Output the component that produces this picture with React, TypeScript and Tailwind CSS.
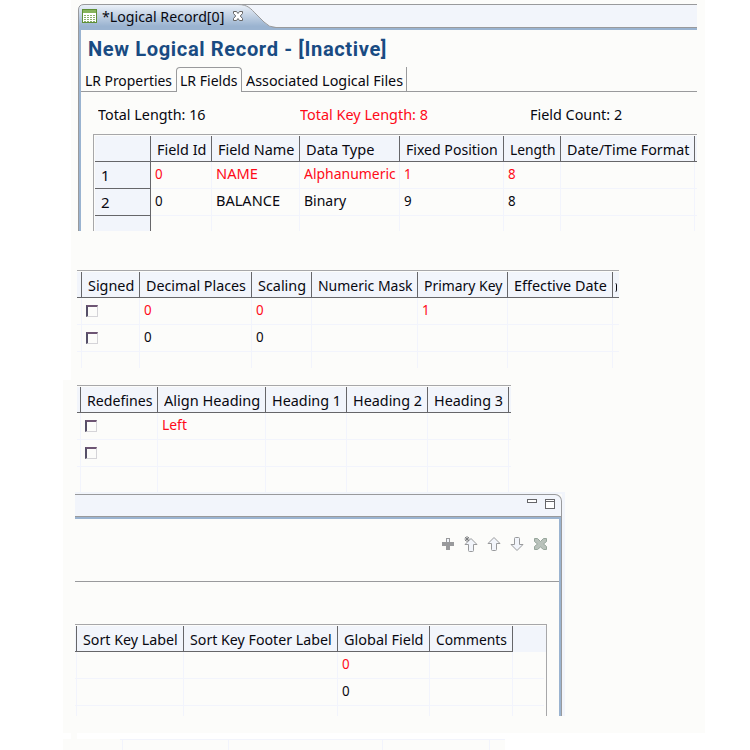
import { useLayoutEffect, useRef, useState, type ReactNode } from "react";

type TextProps = { children: string; w: number; className?: string };

/* A single-line label condensed or widened to an exact width. */
function Label({ children, w, className = "" }: TextProps) {
  const ref = useRef<HTMLSpanElement>(null);
  const [scale, setScale] = useState(1);
  useLayoutEffect(() => {
    if (ref.current) setScale(w / ref.current.offsetWidth);
  }, [w]);
  return (
    <span
      ref={ref}
      className={`inline-block shrink-0 origin-left whitespace-nowrap ${className}`}
      style={{ transform: `scaleX(${scale})` }}
    >
      {children}
    </span>
  );
}

type Cell = { text?: string; w?: number; red?: boolean; check?: boolean } | null;
type Column = {
  size: string;
  title?: string;
  w?: number;
  cells?: Cell[];
  edge?: boolean;
  blank?: boolean;
  clipped?: boolean;
};

function Checkbox() {
  return (
    <span className="mt-[6px] block size-3 shrink-0 border-2 border-t-[#6d5573] border-l-[#554f68] border-r-[#d5d4d8] border-b-[#d5d4d8] border-r-1 border-b-1 bg-[#fcfcfa]" />
  );
}

function Grid({
  columns,
  rowNumbers = false,
  last,
}: {
  columns: Column[];
  rowNumbers?: boolean;
  last: string;
}) {
  return (
    <div className="flex flex-col border-t border-[#a7a7a9] pt-px">
      <div className="flex h-[26px] bg-[#f2f5fb]">
        {rowNumbers && <div className="w-[56px] shrink-0 border-r border-b border-[#666669]" />}
        {columns.map((c, i) => (
          <div
            key={i}
            className={`${c.size} flex shrink-0 overflow-hidden border-[#666669] pt-[3px] ${c.title ? "pl-1.5" : ""} ${c.edge ? "" : "border-r"} ${c.blank ? "" : "border-b"}`}
          >
            {c.title && <Label w={c.w ?? 40}>{c.title}</Label>}
            {c.clipped && (
              <span className="ml-[2px] mt-[8px] h-[9px] w-[2px] rounded-r-[2px] border-r border-[#080810]" />
            )}
          </div>
        ))}
      </div>
      {[0, 1, 2].map((r) => (
        <div key={r} className={`flex ${r === 2 ? last : "h-[27px]"}`}>
          {rowNumbers && (
            <div
              className={`w-[56px] shrink-0 border-r border-[#666669] bg-[#f2f5fb] pl-[6px] pt-[3px] ${r < 2 ? "border-b" : ""}`}
            >
              {r < 2 ? r + 1 : ""}
            </div>
          )}
          {columns.map((c, i) => {
            const cell = c.cells?.[r];
            return (
              <div
                key={i}
                className={`${c.size} flex shrink-0 border-[#f2f4fc] pt-px ${cell ? "pl-[4px]" : ""} ${c.edge ? "" : "border-r"} ${r < 2 ? "border-b" : ""}`}
              >
                {cell?.check && <Checkbox />}
                {cell?.text && (
                  <Label w={cell.w ?? 8} className={cell.red ? "text-[#ff0a18]" : ""}>
                    {cell.text}
                  </Label>
                )}
              </div>
            );
          })}
        </div>
      ))}
    </div>
  );
}

const zeroes: Cell[] = [{ text: "0", red: true }, { text: "0" }];
const checks: Cell[] = [{ check: true }, { check: true }];

const fields: Column[] = [
  { size: "w-[61px]", title: "Field Id", w: 49, cells: zeroes },
  {
    size: "w-[88px]",
    title: "Field Name",
    w: 76,
    cells: [{ text: "NAME", w: 42, red: true }, { text: "BALANCE", w: 64 }],
  },
  {
    size: "w-[100px]",
    title: "Data Type",
    w: 68,
    cells: [{ text: "Alphanumeric", w: 92, red: true }, { text: "Binary", w: 42 }],
  },
  { size: "w-[104px]", title: "Fixed Position", w: 92, cells: [{ text: "1", red: true }, { text: "9" }] },
  { size: "w-[57px]", title: "Length", w: 46, cells: [{ text: "8", red: true }, { text: "8" }] },
  { size: "w-[134px]", title: "Date/Time Format", w: 122 },
  { size: "w-[2px]", edge: true },
];

const numeric: Column[] = [
  { size: "w-[5px]" },
  { size: "w-[58px]", title: "Signed", w: 46, cells: checks },
  { size: "w-[112px]", title: "Decimal Places", w: 100, cells: zeroes },
  { size: "w-[60px]", title: "Scaling", w: 48, cells: zeroes },
  { size: "w-[106px]", title: "Numeric Mask", w: 95 },
  { size: "w-[90px]", title: "Primary Key", w: 78, cells: [{ text: "1", red: true }] },
  { size: "w-[105px]", title: "Effective Date", w: 93 },
  { size: "w-[6px]", edge: true, clipped: true },
];

const headings: Column[] = [
  { size: "w-[4px]" },
  { size: "w-[77px]", title: "Redefines", w: 65, cells: checks },
  { size: "w-[108px]", title: "Align Heading", w: 96, cells: [{ text: "Left", w: 25, red: true }] },
  { size: "w-[81px]", title: "Heading 1", w: 69 },
  { size: "w-[81px]", title: "Heading 2", w: 69 },
  { size: "w-[81px]", title: "Heading 3", w: 69 },
  { size: "w-[2px]", edge: true },
];

const sorting: Column[] = [
  { size: "w-[2px]" },
  { size: "w-[107px]", title: "Sort Key Label", w: 95 },
  { size: "w-[154px]", title: "Sort Key Footer Label", w: 142 },
  { size: "w-[92px]", title: "Global Field", w: 80, cells: zeroes },
  { size: "w-[83px]", title: "Comments", w: 71 },
  { size: "w-[31px]", edge: true, blank: true },
];

function EditorTab() {
  return (
    <div className="relative h-[26px] w-[619px] bg-[linear-gradient(to_bottom,#999a9c_1px,#f2f5fb_1px,#f2f5fb_23px,#999a9c_23px,#999a9c_24px,#9ab3d0_24px)]">
      <svg className="absolute left-0 top-0" width="210" height="26" viewBox="0 0 210 26">
        <defs>
          <linearGradient id="tab" x1="0" y1="0" x2="0" y2="1">
            <stop offset="0" stopColor="#edf2f9" />
            <stop offset="0.85" stopColor="#9ab3d0" />
          </linearGradient>
        </defs>
        <path d="M0 0H6L0 6z" fill="#fcfcfa" />
        <path
          d="M.5 26V6Q.5 .5 6 .5H160C170 .5 173 5 178 10L186 18Q191 23.500 198 23.500V26z"
          fill="url(#tab)"
        />
        <path
          d="M.5 26V6Q.5 .5 6 .5H160C170 .5 173 5 178 10L186 18Q191 23.500 198 23.500"
          fill="none"
          stroke="#999a9c"
        />
        <rect x="4.500" y="5.500" width="14" height="13" fill="#fff" stroke="#5f8f37" />
        <path d="M5 6h13v3H5z" fill="#86b35c" />
        <path d="M6 11.500h11M6 13.500h11M6 15.500h11M6 17.500h11" stroke="#8bae6d" />
        <path d="M8.500 10v8M11.500 10v8M14.500 10v8" stroke="#fff" />
        <path
          d="M155.500 7.500h3l1.500 2 1.500-2h3v2l-2.200 2.500 2.200 2.500v2h-3l-1.500-2-1.500 2h-3v-2l2.200-2.500-2.200-2.500z"
          fill="#fff"
          stroke="#666"
        />
      </svg>
      <div className="relative flex pl-6 pt-[2px]">
        <Label w={122}>*Logical Record[0]</Label>
      </div>
    </div>
  );
}

function Icon({ children }: { children: ReactNode }) {
  return (
    <svg width="16" height="16" viewBox="0 0 16 16" fill="#f2f5fb" stroke="#999a9c">
      {children}
    </svg>
  );
}

function Toolbar() {
  return (
    <div className="flex h-4 gap-[7px] pl-[365px]">
      <Icon>
        <path d="M6 2h4v4h4v4h-4v4H6v-4H2V6h4z" fill="#999a9c" stroke="none" />
        <path d="M7 3h2v3H7z" stroke="none" />
      </Icon>
      <Icon>
        <path d="M8 2.500l6 6h-3.500v6q0 1-1 1h-3q-1 0-1-1v-6H2z" />
        <path d="M2 1l4 4M6 1L2 5M4 0v6M1.500 3h5" strokeWidth=".9" stroke="#77787b" />
      </Icon>
      <Icon>
        <path d="M8 1.500l6 6h-3.500v6q0 1-1 1h-3q-1 0-1-1v-6H2z" />
      </Icon>
      <Icon>
        <path d="M8 14.500l-6-6h3.500v-6q0-1 1-1h3q1 0 1 1v6H14z" />
      </Icon>
      <Icon>
        <path
          d="M2.500 2.500h3L8.500 5.500l3-3h3v3L11.500 8l3 2.500v3h-3L8.500 11l-3 2.500h-3v-3L5.500 8 2.500 5.500z"
          fill="#b9c2bb"
          stroke="#96a69b"
        />
      </Icon>
    </div>
  );
}

export default function App() {
  return (
    <div className="flex h-[750px] w-[750px] flex-col bg-[linear-gradient(to_right,#ffffff_71px,#fcfcfa_71px,#fcfcfa_705px,#ffffff_705px)] font-['Noto_Sans',sans-serif] text-[15px] leading-[20px] text-[#080810]">
      <div className="h-[380px] pt-1">
        <section className="ml-[78px] flex h-[227px] w-[619px] flex-col">
          <EditorTab />
          <div className="flex grow flex-col border-l border-[#999a9c]">
            <div className="flex grow flex-col border-l-2 border-[#9ab3d0]">
              <h1 className="flex h-[37px] pl-[7px] pt-[8px] font-['Roboto',sans-serif] text-[20px] font-bold leading-[22px] tracking-[0.6px] text-[#194b82]">
                <Label w={299}>New Logical Record - [Inactive]</Label>
              </h1>
              <nav className="flex h-[25px]">
                <div className="w-[95px] border-b border-[#999a9c] pl-[4px] pt-[3px]">
                  <Label w={87}>LR Properties</Label>
                </div>
                <div className="w-[66px] rounded-t-[4px] border border-b-0 border-[#999a9c] pl-[3px] pt-[2px]">
                  <Label w={58}>LR Fields</Label>
                </div>
                <div className="w-[165px] border-b border-r border-[#999a9c] pl-[4px] pt-[3px]">
                  <Label w={157}>Associated Logical Files</Label>
                </div>
                <div className="grow border-b border-[#999a9c]" />
              </nav>
              <div className="flex h-[42px] pt-[12px]">
                <div className="w-[202px] pl-[17px]">
                  <Label w={108}>Total Length: 16</Label>
                </div>
                <div className="w-[230px] pl-[17px] text-[#ff0a18]">
                  <Label w={128}>Total Key Length: 8</Label>
                </div>
                <div className="pl-[17px]">
                  <Label w={92}>Field Count: 2</Label>
                </div>
              </div>
              <div className="ml-[12px] flex w-[604px] border-l border-[#a7a7a9]">
                <div className="w-px border-t border-[#a7a7a9]" />
                <div className="w-[602px]">
                  <Grid columns={fields} rowNumbers last="h-[15px]" />
                </div>
              </div>
            </div>
          </div>
        </section>
        <section className="ml-[77px] mt-[39px] w-[542px]">
          <Grid columns={numeric} last="h-[16px]" />
        </section>
      </div>
      <div className="ml-[63px] h-[353px] w-[642px] bg-[#fcfcfa] pt-[5px]">
        <section className="ml-[14px] h-[107px] w-[434px]">
          <Grid columns={headings} last="h-[25px]" />
        </section>
        <section className="ml-[12px] flex h-[224px] w-[490px] flex-col border-r-3 border-t-2 border-[#f2f5fb]">
          <div className="flex h-6 justify-end gap-[8px] rounded-tr-[7px] border-b border-r border-t border-[#999a9c] bg-[#f2f5fb] pr-[6px] pt-1">
            <span className="h-[4px] w-[10px] border border-[#666669] bg-white" />
            <span className="h-[10px] w-[10px] border border-t-3 border-double border-[#666669] bg-white" />
          </div>
          <div className="grow border-r border-[#999a9c]">
            <div className="h-full border-r-2 border-t-2 border-[#9ab3d0]">
              <div className="h-[63px] border-b border-[#999a9c] pt-[17px]">
                <Toolbar />
              </div>
              <div className="mt-[42px] w-[472px] border-r border-[#a7a7a9]">
                <Grid columns={sorting} last="h-[10px]" />
              </div>
            </div>
          </div>
        </section>
      </div>
      <div className="ml-[77px] h-[6px] bg-white" />
      <div className="flex grow">
        <div className="flex w-[505px] pl-[63px]">
          <div className="w-[57px] bg-[#fcfcfa]" />
          <div className="flex w-[385px] border-t border-[#f2f4fc] bg-[#fcfcfa]">
            <div className="w-[3px] border-r border-[#f2f4fc]" />
            <div className="w-[106px] border-r border-[#f2f4fc]" />
            <div className="w-[154px] border-r border-[#f2f4fc]" />
            <div className="w-[107px] border-r border-[#f2f4fc]" />
          </div>
        </div>
        <div className="grow bg-white" />
      </div>
    </div>
  );
}
